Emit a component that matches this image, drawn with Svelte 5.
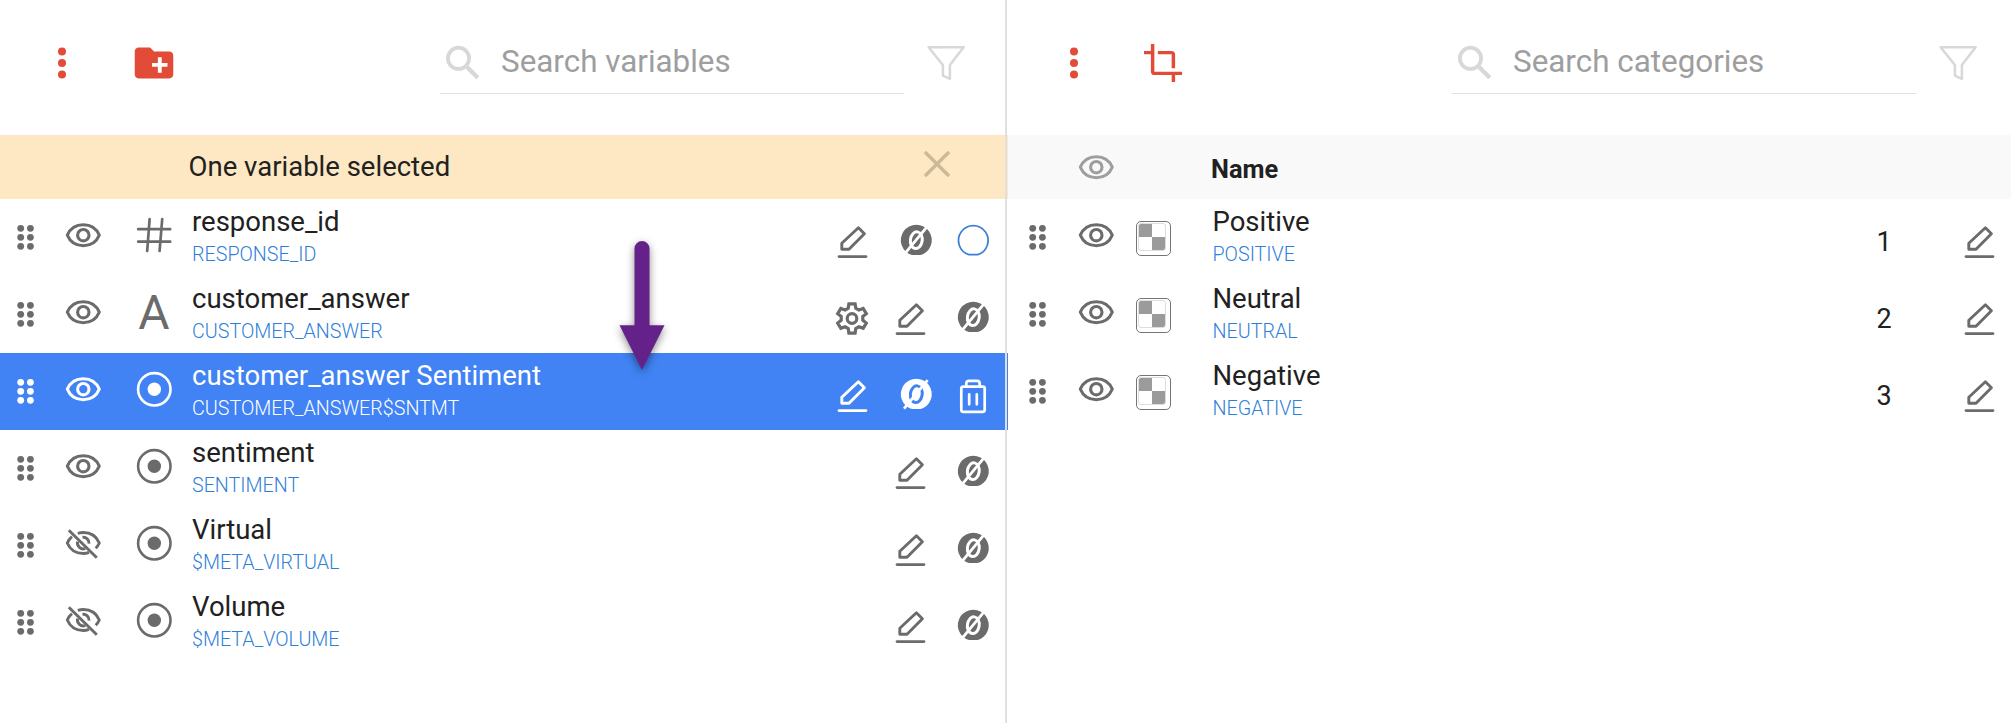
<script>
  const variables = [
    { name: 'response_id', code: 'RESPONSE_ID', type: 'hash', visible: true, actions: ['edit', 'null', 'circle'] },
    { name: 'customer_answer', code: 'CUSTOMER_ANSWER', type: 'alpha', visible: true, actions: ['gear', 'edit', 'null'] },
    { name: 'customer_answer Sentiment', code: 'CUSTOMER_ANSWER$SNTMT', type: 'radio', visible: true, selected: true, actions: ['edit', 'null', 'trash'] },
    { name: 'sentiment', code: 'SENTIMENT', type: 'radio', visible: true, actions: ['', 'edit', 'null'] },
    { name: 'Virtual', code: '$META_VIRTUAL', type: 'radio', visible: false, actions: ['', 'edit', 'null'] },
    { name: 'Volume', code: '$META_VOLUME', type: 'radio', visible: false, actions: ['', 'edit', 'null'] },
  ];
  const categories = [
    { name: 'Positive', code: 'POSITIVE', value: 1 },
    { name: 'Neutral', code: 'NEUTRAL', value: 2 },
    { name: 'Negative', code: 'NEGATIVE', value: 3 },
  ];
</script>

{#snippet icon(kind)}
  <svg class="icon i-{kind}" width="40" height="40" viewBox="0 0 40 40" fill="none" stroke="currentColor">
    {#if kind === 'drag'}
      <g fill="currentColor" stroke="none">
        {#each [11.3, 20.3, 29.3] as y}
          <circle cx="15.7" cy={y} r="3.4" /><circle cx="25.4" cy={y} r="3.4" />
        {/each}
      </g>
    {:else if kind === 'eye'}
      <path d="M4.3 18.2C7 11.7 13 7.7 20.3 7.7S33.6 11.7 36.3 18.2C33.6 24.7 27.6 28.7 20.3 28.7S7 24.7 4.3 18.2Z" stroke-width="3" stroke-linejoin="round" />
      <circle cx="20.3" cy="18.2" r="5.7" stroke-width="3.1" />
    {:else if kind === 'eyeoff'}
      <path d="M14.8 8.3C16.5 7.8 18.4 7.5 20.3 7.5C27.6 7.5 33.6 11.5 36.3 18C35.4 20 34.2 21.8 32.7 23.3M26 27.4C24.2 28.1 22.3 28.5 20.3 28.5C13 28.5 7 24.5 4.3 18C5.3 15.5 6.9 13.3 9 11.6M14.6 16.7A5.8 5.8 0 0 0 22.3 23.5M19.5 12.3A5.8 5.8 0 0 1 26 18.6" stroke-width="2.9" />
      <path d="M5.8 5.2L33.8 32.7" stroke-width="2.9" />
    {:else if kind === 'hash'}
      <path d="M4.2 12.2H36.2M4.2 24.7H36.2M15.6 2.2L13.2 34M28.2 2.2L25.6 34" stroke-width="2.7" stroke-linecap="round" />
    {:else if kind === 'radio'}
      <circle cx="20.3" cy="18.3" r="16.2" stroke-width="2.6" />
      <circle cx="20.3" cy="18.3" r="6.7" fill="currentColor" stroke="none" />
    {:else if kind === 'edit'}
      <path d="M26.4 6.8L32.4 12.8L17 28.2H9.8V22.3Z" stroke-width="2.9" stroke-linejoin="round" />
      <path d="M7 35.6H34" stroke-width="2.7" stroke-linecap="round" />
    {:else if kind === 'null'}
      <g transform="translate(0 -.3)">
        <path d="M16.1 34.4A15.5 15.5 0 1 1 24.5 34.4Z" fill="currentColor" stroke="none" />
        <ellipse class="ring" cx="20.3" cy="19.5" rx="5.9" ry="8.4" stroke-width="3" transform="rotate(8 20.3 19.5)" />
        <path class="slash" d="M8 34L31.6 5.5" stroke-width="2.8" />
      </g>
    {:else if kind === 'circle'}
      <path d="M15.9 33.6A14.8 14.8 0 1 1 24.7 33.6Z" stroke-width="1.7" />
    {:else if kind === 'gear'}
      <circle cx="20" cy="20.5" r="4.8" stroke-width="3.2" />
      <path transform="translate(0 .3)" d="M16.9 5.5H23.1L23.8 10L26.9 11.8L31.2 10.2L34.3 15.4L30.8 18.3V21.9L34.3 24.8L31.2 30L26.9 28.5L23.8 30.3L23.1 34.8H16.9L16.2 30.3L13.1 28.5L8.8 30L5.7 24.8L9.2 21.9V18.3L5.7 15.4L8.8 10.2L13.1 11.8L16.2 10Z" stroke-width="3.2" />
    {:else if kind === 'trash'}
      <rect x="8.3" y="11.6" width="23.4" height="25.2" rx="2" stroke-width="2.7" />
      <path d="M13.3 11V8.5Q13.3 5.8 16 5.8H24Q26.7 5.8 26.7 8.5V11M16.2 19.3V29.3M23.8 19.3V29.3" stroke-width="2.7" stroke-linecap="round" />
    {:else if kind === 'more'}
      <g fill="currentColor" stroke="none"><circle cx="20" cy="8.5" r="4" /><circle cx="20" cy="20" r="4" /><circle cx="20" cy="31.5" r="4" /></g>
    {:else if kind === 'folder'}
      <path transform="translate(-3.1 -3.1) scale(1.925)" fill="currentColor" stroke="none" d="M20 6h-8l-2-2H4c-1.1 0-2 .9-2 2v12c0 1.1.9 2 2 2h16c1.1 0 2-.9 2-2V8c0-1.1-.9-2-2-2zm-1 8h-3v3h-2v-3h-3v-2h3V9h2v3h3z" />
    {:else if kind === 'crop'}
      <path transform="translate(-.75 -.75) scale(1.73)" fill="currentColor" stroke="none" d="M17 15h2V7c0-1.1-.9-2-2-2H9v2h8v8zM7 17V1H5v4H1v2h4v10c0 1.1.9 2 2 2h10v4h2v-4h4v-2H7z" />
    {:else if kind === 'search'}
      <circle cx="15.5" cy="15.3" r="10.6" stroke-width="3.8" />
      <path d="M23.8 23.8L34.8 34.8" stroke-width="4.3" />
    {:else if kind === 'funnel'}
      <path d="M2.6 4.3H37.6L23.9 22V36L16.9 32.6V22Z" stroke-width="2.5" stroke-linejoin="round" />
    {:else if kind === 'close'}
      <path d="M8 8L32 32M32 8L8 32" stroke-width="3.5" />
    {/if}
  </svg>
{/snippet}

{#snippet toolbar(second, label)}
  <header class="toolbar">
    <span class="red">{@render icon('more')}</span>
    <span class="red second">{@render icon(second)}</span>
    <div class="search">{@render icon('search')}<span>{label}</span></div>
    <span class="filter">{@render icon('funnel')}</span>
  </header>
{/snippet}

<main>
  <section class="panel variables">
    {@render toolbar('folder', 'Search variables')}
    <div class="notice"><span>One variable selected</span>{@render icon('close')}</div>
    {#each variables as v}
      <div class="row" class:selected={v.selected}>
        {@render icon('drag')}
        {@render icon(v.visible ? 'eye' : 'eyeoff')}
        {#if v.type === 'alpha'}
          <span class="alpha">A</span>
        {:else}
          {@render icon(v.type)}
        {/if}
        <div class="label"><div class="name">{v.name}</div><div class="code">{v.code}</div></div>
        <div class="actions">
          {#each v.actions as a}
            <span class="slot">{#if a}{@render icon(a)}{/if}</span>
          {/each}
        </div>
      </div>
    {/each}
    <svg class="arrow" width="70" height="150" viewBox="0 0 70 150" fill="#65218a">
      <path d="M27.5 18.5a7.5 7.5 0 0 1 15 0V95.3H57.5L35 140L12.5 95.3H27.5Z" />
    </svg>
    <div class="divider"></div>
  </section>

  <section class="panel categories">
    {@render toolbar('crop', 'Search categories')}
    <div class="head">{@render icon('eye')}<span>Name</span></div>
    {#each categories as c}
      <div class="row">
        {@render icon('drag')}
        {@render icon('eye')}
        <div class="swatch"><div class="checks"><i></i><i></i><i></i><i></i></div></div>
        <div class="label"><div class="name">{c.name}</div><div class="code">{c.code}</div></div>
        <div class="value">{c.value}</div>
        <div class="single">{@render icon('edit')}</div>
      </div>
    {/each}
  </section>
</main>

<style>
  :global(body) { background: #fff; }
  main {
    display: flex;
    height: 723px;
    overflow: hidden;
    font-family: Roboto, sans-serif;
    color: #212121;
  }
  .panel { box-sizing: border-box; position: relative; }
  .variables { width: 1008px; }
  .categories { width: 1003px; }
  .icon { display: block; flex: none; overflow: visible; }

  .toolbar {
    box-sizing: border-box;
    height: 135px;
    display: flex;
    align-items: flex-start;
    padding: 43px 0 0 42px;
  }
  .categories .toolbar { padding-left: 46px; }
  .red { color: #e14b37; }
  .second { margin-left: 52px; }
  .categories .second { margin-left: 49px; }
  .search {
    box-sizing: border-box;
    display: flex;
    width: 464px;
    height: 51px;
    margin-left: 266px;
    padding-left: 3px;
    border-bottom: 1px solid #e0e0e0;
    color: #d8d8d8;
    white-space: nowrap;
  }
  .categories .search { margin-left: 269px; }
  .search span {
    margin-left: 18px;
    font-size: 31.4px;
    line-height: 37px;
    color: #9e9e9e;
  }
  .filter { margin-left: 22px; color: #d8d8d8; }

  .notice, .head {
    box-sizing: border-box;
    height: 64px;
    display: flex;
    align-items: flex-start;
  }
  .notice {
    justify-content: space-between;
    padding: 9px 51px 0 188.6px;
    background: #fee8c3;
  }
  .notice span { font-size: 27.5px; line-height: 46px; }
  .notice .icon { color: #ccb998; }
  .head { padding: 14px 0 0 68px; background: #f9f9f9; color: #9e9e9e; }
  .head span {
    margin-left: 95px;
    font-size: 25.4px;
    line-height: 40px;
    font-weight: 700;
    color: #212121;
  }

  .row {
    box-sizing: border-box;
    height: 77px;
    display: flex;
    align-items: flex-start;
    padding: 18px 15px 0 5px;
    color: #6b6b6b;
  }
  .row > .icon + .icon { margin-left: 18px; }
  .row > .icon + .icon + .icon, .alpha { margin-left: 31px; }
  .alpha {
    width: 40px;
    font-size: 48px;
    line-height: 38px;
    text-align: center;
  }
  .label { margin: -11px 0 0 18px; white-space: nowrap; }
  .name { font-size: 27.5px; line-height: 31px; color: #212121; }
  .code {
    margin-top: 2px;
    font-size: 19.7px;
    line-height: 32px;
    font-weight: 300;
    color: #2f7fd9;
  }
  .actions {
    display: grid;
    grid-template-columns: 58px 63px 40px;
    margin: 4px 0 0 auto;
  }
  .slot:nth-child(2) .i-null { margin-left: 6px; }
  .ring, .slash { stroke: #fff; }
  .i-circle { color: #3b7fd9; }

  .selected { background: #4183f4; color: #fff; }
  .selected .name, .selected .code { color: #fff; }
  .selected .ring { stroke: #4183f4; }

  .categories .row { padding: 18px 12px 0 9px; }
  .categories .row > .icon + .icon { margin-left: 19px; }
  .swatch {
    box-sizing: border-box;
    width: 35px;
    height: 35px;
    margin: 4px 0 0 20px;
    padding: 1px;
    border: 1px solid #757575;
    border-radius: 5px;
  }
  .checks {
    box-sizing: border-box;
    display: grid;
    grid-template-columns: 13px 13px;
    grid-template-rows: 13px 13px;
    width: 28px;
    height: 28px;
    border: 1px solid #ddd;
    border-radius: 3px;
    overflow: hidden;
  }
  .checks i:nth-child(1), .checks i:nth-child(4) { background: #9b9b9b; }
  .categories .label { margin-left: 41.5px; }
  .value {
    width: 30px;
    margin: 9px 0 0 auto;
    font-size: 27px;
    line-height: 32px;
    text-align: center;
    color: #212121;
  }
  .single { margin: 4px 0 0 60px; }

  .divider {
    position: absolute;
    top: 0;
    bottom: 0;
    left: 1005px;
    width: 2px;
    background: #e0e0e0;
  }
  .arrow {
    position: absolute;
    left: 606.5px;
    top: 230px;
    filter: drop-shadow(0 3px 4px rgba(0, 0, 0, .45));
  }
</style>
